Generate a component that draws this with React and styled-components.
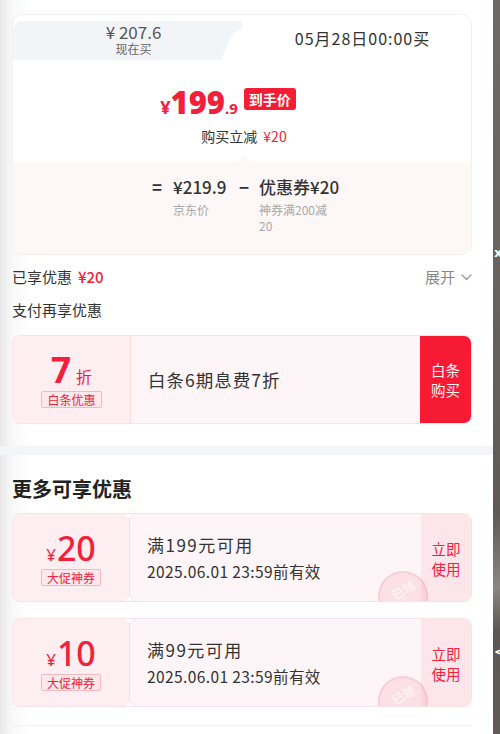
import React from "react";
import styled, { createGlobalStyle } from "styled-components";

const RED = "#f2203b";

const Global = createGlobalStyle`
  html, body { margin: 0; padding: 0; background: #fff; }
  body { font-family: "Noto Sans CJK SC", "Noto Sans", sans-serif; color: #333; }
  * { box-sizing: border-box; }
`;

const Page = styled.div`
  display: flex;
  width: 500px;
  height: 734px;
  overflow: hidden;
`;

const Panel = styled.div`
  width: 493px;
  flex: none;
  background: linear-gradient(90deg, #e9e9e9 0px, #f8f8f8 12px, #ffffff 30px);
  display: flex;
  flex-direction: column;
`;

const Strip = styled.div`
  flex: 1;
  position: relative;
  overflow: hidden;
  background: linear-gradient(180deg, #6e6963 0%, #67625c 40%, #5f5a55 70%, #8c8680 80%, #5c5752 86%, #605b56 100%);
`;

const StripGlyph = styled.span`
  position: absolute;
  left: 1px;
  top: ${(p) => p.$top}px;
  color: #fff;
  font: bold 13px "DejaVu Sans", sans-serif;
`;

const Section = styled.div`
  padding: ${(p) => p.$pt || 0}px 21px 0 12px;
  display: flex;
  flex-direction: column;
`;

const Card = styled.div`
  border: 1px solid #f4eef0;
  border-radius: 10px;
  background: #fff;
  display: flex;
  flex-direction: column;
`;

const TabRow = styled.div`
  display: grid;
  grid-template-columns: 1fr 1fr;
  align-items: end;
  height: 45px;
`;

const TabLeft = styled.div`
  height: 39px;
  background: #f3f4f7;
  border-top-left-radius: 10px;
  display: flex;
  flex-direction: column;
  align-items: center;
  padding: 1px 0 0 12px;
  color: #555;
`;

const TabRight = styled.div`
  position: relative;
  height: 45px;
  background: #fff;
  border-top-left-radius: 12px;
  border-top-right-radius: 10px;
  display: flex;
  justify-content: center;
  padding: 13px 0 0 12px;
  font-size: 16px;
  line-height: 20px;
  letter-spacing: 1px;
  color: #333;
  &::before {
    content: "";
    position: absolute;
    left: -14px;
    bottom: 0;
    width: 30px;
    height: 32px;
    background: #fff;
    border-top-left-radius: 10px;
    transform: skewX(-24deg);
  }
  span { position: relative; }
`;

const OldPrice = styled.div`
  font-size: 17px;
  line-height: 19px;
`;

const SmallNote = styled.div`
  margin-top: 1px;
  font-size: 12px;
  line-height: 14px;
  color: #666;
`;

const Body = styled.div`
  height: 102px;
  display: flex;
  flex-direction: column;
  align-items: center;
  padding-top: 28px;
`;

const PriceLine = styled.div`
  display: flex;
  align-items: center;
  gap: 6px;
  margin-left: -28px;
  height: 30px;
`;

const Price = styled.div`
  color: ${RED};
  font-weight: 700;
  display: flex;
  align-items: baseline;
  font-family: "Noto Sans", "Noto Sans CJK SC", sans-serif;
  small { font-size: 18px; }
  b { font-size: 31px; line-height: 30px; }
  i { font-style: normal; font-size: 15px; }
`;

const Badge = styled.span`
  background: #f51c34;
  color: #fff;
  font-size: 14px;
  font-weight: 700;
  line-height: 22px;
  padding: 0 5px;
  border-radius: 3px;
  margin-top: -8px;
`;

const SubLine = styled.div`
  margin-top: 8px;
  margin-left: 4px;
  font-size: 14px;
  line-height: 20px;
  color: #333;
  em { font-style: normal; color: ${RED}; margin-left: 6px; }
`;

const Details = styled.div`
  position: relative;
  height: 92px;
  background: #fdf7f8;
  border-radius: 0 0 10px 10px;
  display: flex;
  justify-content: center;
  align-items: flex-start;
  padding: 14px 0 0 6px;
  gap: 8px;
  &::before {
    content: "";
    position: absolute;
    top: -7px;
    left: 224px;
    border-left: 7px solid transparent;
    border-right: 7px solid transparent;
    border-bottom: 7px solid #fdf7f8;
  }
`;

const Op = styled.div`
  font-size: 17px;
  line-height: 22px;
  font-weight: 700;
  color: #333;
  width: ${(p) => p.$w}px;
  text-align: center;
`;

const Term = styled.div`
  display: flex;
  flex-direction: column;
  width: ${(p) => p.$w}px;
`;

const TermValue = styled.div`
  font-size: 17px;
  line-height: 22px;
  font-weight: 500;
  color: #333;
  white-space: nowrap;
`;

const TermLabel = styled.div`
  margin-top: 4px;
  font-size: 12px;
  line-height: 16px;
  color: #a8a8a8;
  max-width: 76px;
`;

const InfoRow = styled.div`
  margin-top: ${(p) => p.$mt}px;
  display: flex;
  justify-content: space-between;
  align-items: center;
  font-size: 15px;
  line-height: 20px;
  color: #333;
  em { font-style: normal; color: ${RED}; margin-left: 6px; font-weight: 500; }
`;

const Expand = styled.span`
  display: flex;
  align-items: center;
  gap: 6px;
  color: #888;
  font-size: 15px;
  svg { display: block; }
`;

const OfferCard = styled.div`
  margin-top: ${(p) => p.$mt}px;
  height: 89px;
  display: flex;
  border: 1px solid #f8e2e6;
  border-radius: 8px;
  overflow: hidden;
  position: relative;
  background: #fdf5f7;
`;

const OfferLeft = styled.div`
  width: ${(p) => p.$w}px;
  flex: none;
  background: #fdeef1;
  border-right: 1px solid #f7dfe4;
  display: flex;
  flex-direction: column;
  align-items: center;
  justify-content: center;
  color: ${RED};
`;

const Big = styled.div`
  display: flex;
  align-items: baseline;
  gap: ${(p) => p.$gap || 0}px;
  height: 36px;
  font-family: "Noto Sans", "Noto Sans CJK SC", sans-serif;
  b { font-size: ${(p) => p.$size}px; font-weight: ${(p) => p.$weight}; line-height: 36px; }
  small { font-size: ${(p) => p.$small}px; }
`;

const Tag = styled.span`
  margin-top: 3px;
  border: 1px solid #f6b7c1;
  background: #fde9ec;
  color: ${RED};
  font-size: 12px;
  line-height: 15px;
  padding: 0 5px;
  border-radius: 2px;
`;

const OfferMid = styled.div`
  flex: 1;
  display: flex;
  flex-direction: column;
  justify-content: center;
  padding-left: 17px;
  gap: ${(p) => p.$gap || 0}px;
`;

const MidTitle = styled.div`
  font-size: ${(p) => p.$size}px;
  line-height: 22px;
  color: #333;
  letter-spacing: ${(p) => p.$ls}px;
`;

const MidSub = styled.div`
  font-size: 15.5px;
  line-height: 20px;
  letter-spacing: 0.4px;
  color: #333;
`;

const SideAction = styled.div`
  width: ${(p) => p.$w}px;
  flex: none;
  background: ${(p) => p.$bg};
  color: ${(p) => p.$color};
  font-size: 14.5px;
  line-height: 20px;
  display: flex;
  flex-direction: column;
  align-items: center;
  justify-content: center;
  padding-top: ${(p) => p.$pt || 0}px;
  span { display: block; }
`;

const Notch = styled.span`
  position: absolute;
  left: 111px;
  ${(p) => (p.$bottom ? "bottom: -5px;" : "top: -5px;")}
  width: 10px;
  height: 10px;
  border-radius: 50%;
  background: #fff;
  border: 1px solid #f8e2e6;
`;

const Stamp = styled.div`
  position: absolute;
  left: 365px;
  top: 57px;
  width: 50px;
  height: 50px;
  border-radius: 50%;
  background: rgba(245, 120, 145, 0.16);
  border: 2px solid rgba(245, 120, 145, 0.2);
  display: flex;
  align-items: center;
  justify-content: center;
  span {
    color: rgba(255, 255, 255, 0.85);
    font-size: 12px;
    transform: rotate(-30deg);
    margin-top: -14px;
  }
`;

const Separator = styled.div`
  margin-top: 22px;
  height: 9px;
  background: #f4f5f8;
`;

const Heading = styled.div`
  margin-top: 20px;
  font-size: 20px;
  line-height: 28px;
  font-weight: 700;
  color: #222;
`;

const BottomLine = styled.div`
  margin-top: 18px;
  height: 1px;
  background: #f2f2f2;
`;

const Chevron = () => (
  <svg width="11" height="7" viewBox="0 0 11 7" fill="none">
    <path d="M1 1l4.5 4.5L10 1" stroke="#999" strokeWidth="1.3" strokeLinecap="round" strokeLinejoin="round" />
  </svg>
);

const coupons = [
  { amount: "20", title: "满199元可用", mt: 10 },
  { amount: "10", title: "满99元可用", mt: 16 },
];

export default function App() {
  return (
    <>
      <Global />
      <Page>
        <Panel>
          <Section $pt={14}>
            <Card>
              <TabRow>
                <TabLeft>
                  <OldPrice>¥ 207.6</OldPrice>
                  <SmallNote>现在买</SmallNote>
                </TabLeft>
                <TabRight>
                  <span>05月28日00:00买</span>
                </TabRight>
              </TabRow>
              <Body>
                <PriceLine>
                  <Price>
                    <small>¥</small>
                    <b>199</b>
                    <i>.9</i>
                  </Price>
                  <Badge>到手价</Badge>
                </PriceLine>
                <SubLine>
                  购买立减<em>¥20</em>
                </SubLine>
              </Body>
              <Details>
                <Op $w={16}>=</Op>
                <Term $w={56}>
                  <TermValue>¥219.9</TermValue>
                  <TermLabel>京东价</TermLabel>
                </Term>
                <Op $w={14}>−</Op>
                <Term $w={82}>
                  <TermValue>优惠券¥20</TermValue>
                  <TermLabel>神券满200减20</TermLabel>
                </Term>
              </Details>
            </Card>
            <InfoRow $mt={12}>
              <span>
                已享优惠<em>¥20</em>
              </span>
              <Expand>
                展开 <Chevron />
              </Expand>
            </InfoRow>
            <InfoRow $mt={13}>
              <span>支付再享优惠</span>
            </InfoRow>
            <OfferCard $mt={15}>
              <OfferLeft $w={118}>
                <Big $size={35} $weight={700} $small={16} $gap={5}>
                  <b>7</b>
                  <small>折</small>
                </Big>
                <Tag>白条优惠</Tag>
              </OfferLeft>
              <OfferMid>
                <MidTitle $size={17.5} $ls={1}>白条6期息费7折</MidTitle>
              </OfferMid>
              <SideAction $w={51} $bg="#f61a32" $color="#fff3f4">
                <span>白条</span>
                <span>购买</span>
              </SideAction>
            </OfferCard>
          </Section>
          <Separator />
          <Section>
            <Heading>更多可享优惠</Heading>
            {coupons.map((c) => (
              <OfferCard key={c.amount} $mt={c.mt}>
                <OfferLeft $w={117}>
                  <Big $size={34} $weight={500} $small={17} $gap={1}>
                    <small>¥</small>
                    <b>{c.amount}</b>
                  </Big>
                  <Tag>大促神券</Tag>
                </OfferLeft>
                <Notch />
                <Notch $bottom />
                <OfferMid $gap={5}>
                  <MidTitle $size={17} $ls={1.5}>{c.title}</MidTitle>
                  <MidSub>2025.06.01 23:59前有效</MidSub>
                </OfferMid>
                <SideAction $w={50} $bg="#fde6eb" $color={RED} $pt={2}>
                  <span>立即</span>
                  <span>使用</span>
                </SideAction>
                <Stamp>
                  <span>已领</span>
                </Stamp>
              </OfferCard>
            ))}
            <BottomLine />
          </Section>
        </Panel>
        <Strip>
          <StripGlyph $top={245}>x</StripGlyph>
          <StripGlyph $top={644}>&lt;</StripGlyph>
        </Strip>
      </Page>
    </>
  );
}
